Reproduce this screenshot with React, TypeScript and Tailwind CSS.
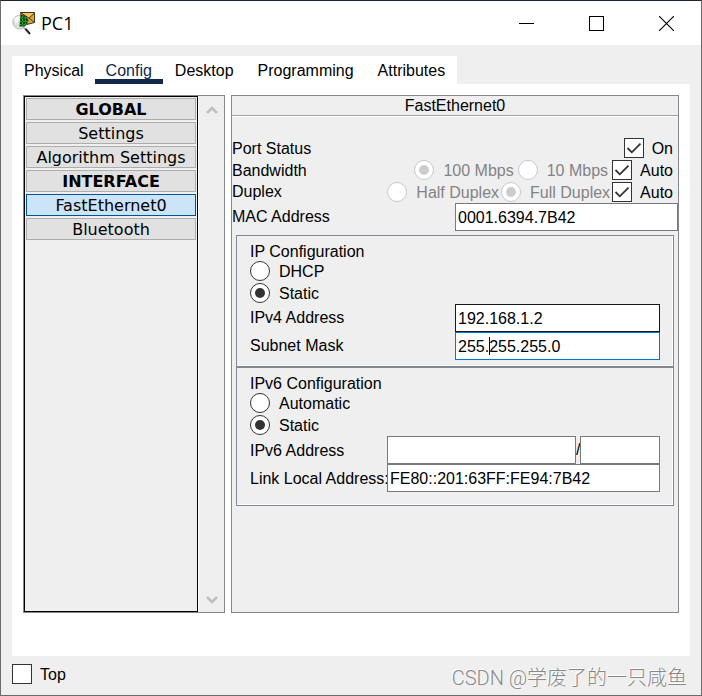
import { useState } from "react";

type MenuItem = { label: string; heading?: boolean };

const tabs = ["Physical", "Config", "Desktop", "Programming", "Attributes"];

const menuItems: MenuItem[] = [
  { label: "GLOBAL", heading: true },
  { label: "Settings" },
  { label: "Algorithm Settings" },
  { label: "INTERFACE", heading: true },
  { label: "FastEthernet0" },
  { label: "Bluetooth" },
];

const fieldClass =
  "h-7 min-w-0 border bg-white px-[2px] pt-[2px] text-base text-black outline-none";
const textClass = "pt-[2px] leading-[18px]";

function AppIcon() {
  return (
    <svg width="24" height="24" viewBox="0 0 24 24" aria-hidden="true">
      <path d="M8.5 1.5 L22.5 1.5 L22.5 11.5 L11 14.5 Z" fill="#d9a441" stroke="#4a3512" strokeWidth="1" />
      <path d="M9.5 2 L21.5 2 L17 7 Z" fill="#efc36a" />
      <path d="M8.5 1.5 L17 7.2 L22.5 2 M17 7.2 L22.5 11.5" fill="none" stroke="#4a3512" strokeWidth="1" />
      <circle cx="7.6" cy="11.2" r="6.8" fill="#dfe0dc" stroke="#b9bab6" strokeWidth="1" />
      <path d="M2 8.5 A6 6 0 0 1 7.5 5 L7.5 9 L4 13 Z" fill="#f6f6f4" />
      <path d="M8.5 3.5 L14 5 L16.5 9.5 L15 13.5 L12 15.5 L7.5 15.5 Z" fill="#0b4513" />
      <path d="M8.5 7 H15 M8 10.5 H16 M8 13.5 H14.5 M10.5 5 V15.5 M13.5 5.5 V14.5" stroke="#1fae38" strokeWidth="1" strokeDasharray="2 1" />
      <path d="M11.5 16.5 L14 18.5" stroke="#9a9a9a" strokeWidth="1.6" />
      <path d="M13.5 17.8 L18 23" stroke="#222" strokeWidth="2" />
    </svg>
  );
}

function Check({
  label,
  checked,
  onChange,
}: {
  label: string;
  checked: boolean;
  onChange: (value: boolean) => void;
}) {
  return (
    <label className="flex items-center gap-2">
      <span className="grid size-5">
        <input
          type="checkbox"
          checked={checked}
          onChange={(e) => onChange(e.target.checked)}
          className="col-start-1 row-start-1 size-5 appearance-none border border-[#333] bg-white"
        />
        {checked && (
          <svg
            viewBox="0 0 20 20"
            className="pointer-events-none col-start-1 row-start-1 size-5"
            fill="none"
            stroke="#333"
            strokeWidth="1.8"
          >
            <path d="M3.5 10 L7.8 14.3 L16.5 5.6" />
          </svg>
        )}
      </span>
      <span className={textClass}>{label}</span>
    </label>
  );
}

function Radio({
  name,
  label,
  checked,
  disabled,
  onChange,
}: {
  name: string;
  label: string;
  checked: boolean;
  disabled?: boolean;
  onChange?: () => void;
}) {
  return (
    <label className={disabled ? "flex items-center gap-[9px] text-[#838383]" : "flex items-center gap-[9px]"}>
      <input
        type="radio"
        name={name}
        checked={checked}
        disabled={disabled}
        onChange={() => onChange?.()}
        className="grid size-5 shrink-0 appearance-none place-content-center rounded-full border border-[#333] bg-white checked:before:size-[10px] checked:before:rounded-full checked:before:bg-[#333] checked:before:content-[''] disabled:border-[#c8c8c8] disabled:checked:before:bg-[#ccc]"
      />
      <span className={textClass}>{label}</span>
    </label>
  );
}

export default function App() {
  const [tab, setTab] = useState("Config");
  const [selected, setSelected] = useState("FastEthernet0");
  const [portOn, setPortOn] = useState(true);
  const [bandwidthAuto, setBandwidthAuto] = useState(true);
  const [duplexAuto, setDuplexAuto] = useState(true);
  const [ipMode, setIpMode] = useState("static");
  const [ipv6Mode, setIpv6Mode] = useState("static");
  const [top, setTop] = useState(false);

  return (
    <div className="flex min-h-screen flex-col border border-[#6b6b6d] border-t-[#1c2433] bg-[#efefef] font-['Liberation_Sans',Arial,sans-serif] text-base leading-5 text-black">
      {/* Title bar */}
      <header className="flex h-11 items-center justify-between bg-white pl-[11px]">
        <div className="flex items-center gap-[5px]">
          <AppIcon />
          <h1 className="font-['Open_Sans','Noto_Sans',sans-serif] text-lg leading-6">PC1</h1>
        </div>
        <div className="flex">
          <button type="button" aria-label="Minimize" className="grid h-11 w-[70px] place-content-center">
            <svg width="15" height="15" stroke="#000" shapeRendering="crispEdges">
              <path d="M0 7.5 H15" />
            </svg>
          </button>
          <button type="button" aria-label="Maximize" className="grid h-11 w-[70px] place-content-center">
            <svg width="15" height="15" fill="none" stroke="#000" shapeRendering="crispEdges">
              <rect x="0.5" y="0.5" width="14" height="14" />
            </svg>
          </button>
          <button type="button" aria-label="Close" className="grid h-11 w-[70px] place-content-center">
            <svg width="15" height="15" stroke="#000" strokeWidth="1.1">
              <path d="M0 0 L15 15 M15 0 L0 15" />
            </svg>
          </button>
        </div>
      </header>

      <main className="flex flex-1 flex-col px-[11px] pt-[11px]">
        <nav className="flex self-start bg-white">
          {tabs.map((t) => (
            <button
              key={t}
              type="button"
              onClick={() => setTab(t)}
              className={
                t === tab
                  ? "h-7 border-b-[5px] border-[#10284b] px-[11px] pt-[6px] leading-[17px] text-[#10284b] first:pl-3"
                  : "h-7 border-b-[5px] border-transparent px-[12px] pt-[6px] leading-[17px] first:pr-[11px]"
              }
            >
              {t}
            </button>
          ))}
        </nav>

        <div className="flex flex-1 gap-[6px] bg-white px-[11px] pt-[11px] pb-[43px]">
          {/* Side menu */}
          <div className="flex w-[202px] shrink-0 border border-[#828790] bg-[#efefef]">
            <div className="flex w-[174px] flex-col gap-[2px] border border-black p-px font-['DejaVu_Sans',Verdana,sans-serif]">
              {menuItems.map((item) => (
                <button
                  key={item.label}
                  type="button"
                  onClick={() => setSelected(item.label)}
                  className={
                    item.label === selected
                      ? "h-[22px] border border-[#005499] bg-[#cce4f7] pt-[2px] leading-[18px]"
                      : item.heading
                        ? "h-[22px] border border-[#adadad] bg-[#e1e1e1] pt-[2px] leading-[18px] font-bold"
                        : "h-[22px] border border-[#adadad] bg-[#e1e1e1] pt-[2px] leading-[18px]"
                  }
                >
                  {item.label}
                </button>
              ))}
            </div>
            <div className="flex flex-1 flex-col items-center justify-between border-l border-white pt-2 pb-[6px]">
              <button type="button" aria-label="Scroll up">
                <svg width="12" height="12" fill="none" stroke="#bfbfbf" strokeWidth="2.6">
                  <path d="M1 9 L6 4 L11 9" />
                </svg>
              </button>
              <button type="button" aria-label="Scroll down">
                <svg width="12" height="12" fill="none" stroke="#bfbfbf" strokeWidth="2.6">
                  <path d="M1 3 L6 8 L11 3" />
                </svg>
              </button>
            </div>
          </div>

          {/* Interface settings */}
          <section className="min-w-0 flex-1 border border-[#828790] bg-[#efefef]">
            <h2 className="h-5 border-b border-[#a0a0a0] text-center leading-[19px]">FastEthernet0</h2>
            <div className="border-t border-white pt-[21px]">
              <div className="flex flex-col gap-[2px] pr-[5px]">
                <div className="flex items-center justify-between">
                  <span className={textClass}>Port Status</span>
                  <Check label="On" checked={portOn} onChange={setPortOn} />
                </div>
                <div className="flex items-center justify-between">
                  <span className={textClass}>Bandwidth</span>
                  <div className="flex gap-1">
                    <Radio name="bandwidth" label="100 Mbps" checked disabled={bandwidthAuto} />
                    <Radio name="bandwidth" label="10 Mbps" checked={false} disabled={bandwidthAuto} />
                    <Check label="Auto" checked={bandwidthAuto} onChange={setBandwidthAuto} />
                  </div>
                </div>
                <div className="flex items-center justify-between">
                  <span>Duplex</span>
                  <div className="flex gap-[2px]">
                    <Radio name="duplex" label="Half Duplex" checked={false} disabled={duplexAuto} />
                    <Radio name="duplex" label="Full Duplex" checked disabled={duplexAuto} />
                    <Check label="Auto" checked={duplexAuto} onChange={setDuplexAuto} />
                  </div>
                </div>
              </div>
              <div className="mt-px flex items-center justify-between">
                <label htmlFor="mac">MAC Address</label>
                <input id="mac" defaultValue="0001.6394.7B42" className={`${fieldClass} w-[223px] border-[#7a7a7a]`} />
              </div>

              <div className="mt-1 px-1">
                <fieldset className="border border-[#828790] px-[13px] pt-[7px] pb-[6px] shadow-[inset_-1px_-1px_0_#fff]">
                  <h3 className="leading-[18px]">IP Configuration</h3>
                  <div className="flex flex-col items-start gap-[2px]">
                    <Radio name="ip" label="DHCP" checked={ipMode === "dhcp"} onChange={() => setIpMode("dhcp")} />
                    <Radio name="ip" label="Static" checked={ipMode === "static"} onChange={() => setIpMode("static")} />
                  </div>
                  <div className="mt-px flex items-center justify-between">
                    <label htmlFor="ipv4">IPv4 Address</label>
                    <input id="ipv4" defaultValue="192.168.1.2" className={`${fieldClass} w-[205px] border-[#171717]`} />
                  </div>
                  <div className="flex items-center justify-between">
                    <label htmlFor="mask">Subnet Mask</label>
                    <div className="relative flex w-[205px]">
                      <input id="mask" defaultValue="255.255.255.0" className={`${fieldClass} w-full border-[#0078d7]`} />
                      {/* text cursor */}
                      <span className="absolute top-[5px] left-[34px] h-[18px] w-px bg-black" />
                    </div>
                  </div>
                </fieldset>

                <fieldset className="min-w-0 border border-[#828790] px-[13px] pt-[7px] pb-[13px] shadow-[inset_-1px_-1px_0_#fff]">
                  <h3 className="leading-[18px]">IPv6 Configuration</h3>
                  <div className="flex flex-col items-start gap-[2px]">
                    <Radio name="ipv6" label="Automatic" checked={ipv6Mode === "auto"} onChange={() => setIpv6Mode("auto")} />
                    <Radio name="ipv6" label="Static" checked={ipv6Mode === "static"} onChange={() => setIpv6Mode("static")} />
                  </div>
                  <div className="mt-px flex items-center justify-between">
                    <label htmlFor="ipv6" className={textClass}>IPv6 Address</label>
                    <div className="flex w-[273px] items-center">
                      <input id="ipv6" className={`${fieldClass} flex-1 border-[#7a7a7a]`} />
                      <span className="w-1">/</span>
                      <input aria-label="Prefix length" className={`${fieldClass} w-20 border-[#7a7a7a]`} />
                    </div>
                  </div>
                  <div className="flex items-center justify-between">
                    <label htmlFor="link-local" className="w-[137px] whitespace-nowrap pt-[2px] leading-[18px]">
                      Link Local Address:
                    </label>
                    <input
                      id="link-local"
                      defaultValue="FE80::201:63FF:FE94:7B42"
                      className={`${fieldClass} w-[273px] border-[#7a7a7a]`}
                    />
                  </div>
                </fieldset>
              </div>
            </div>
          </section>
        </div>
      </main>

      <footer className="flex h-[39px] items-center justify-between pr-[14px] pl-[11px]">
        <div className="pb-1">
          <Check label="Top" checked={top} onChange={setTop} />
        </div>
        <span className="pt-1 font-[Roboto,'Noto_Sans_CJK_SC',sans-serif] text-xl font-light text-[#888] [text-shadow:-1px_-1px_0_#fff]">
          CSDN @学废了的一只咸鱼
        </span>
      </footer>
    </div>
  );
}
